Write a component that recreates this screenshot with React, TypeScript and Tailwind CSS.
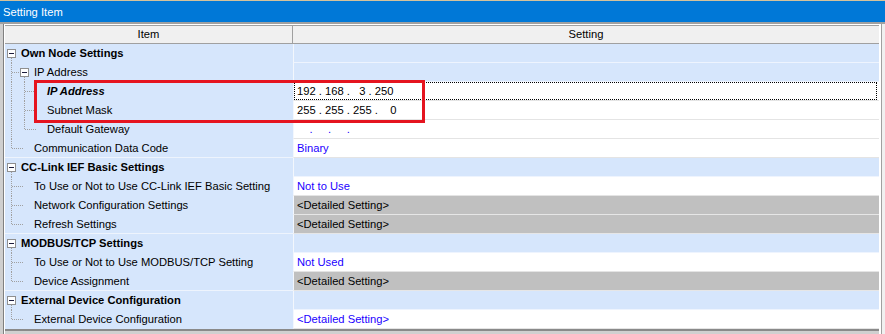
import React from "react";

type Row = {
  label: string;
  level: 0 | 1 | 2;
  bg: "blue" | "white" | "gray";
  value?: string;
  blue?: boolean;
  bold?: boolean;
  italic?: boolean;
  box?: boolean;
  last?: boolean;
  groupEnd?: boolean;
  focus?: boolean;
};

const rows: Row[] = [
  { label: "Own Node Settings", level: 0, bg: "blue" },
  { label: "IP Address", level: 1, box: true, bg: "blue" },
  { label: "IP Address", level: 2, bold: true, italic: true, bg: "white", value: "192 . 168 .   3 . 250", focus: true },
  { label: "Subnet Mask", level: 2, bg: "white", value: "255 . 255 . 255 .    0" },
  { label: "Default Gateway", level: 2, last: true, bg: "white", value: "    .     .     .", blue: true },
  { label: "Communication Data Code", level: 1, last: true, bg: "white", value: "Binary", blue: true, groupEnd: true },
  { label: "CC-Link IEF Basic Settings", level: 0, bg: "blue" },
  { label: "To Use or Not to Use CC-Link IEF Basic Setting", level: 1, bg: "white", value: "Not to Use", blue: true },
  { label: "Network Configuration Settings", level: 1, bg: "gray", value: "<Detailed Setting>" },
  { label: "Refresh Settings", level: 1, last: true, bg: "gray", value: "<Detailed Setting>", groupEnd: true },
  { label: "MODBUS/TCP Settings", level: 0, bg: "blue" },
  { label: "To Use or Not to Use MODBUS/TCP Setting", level: 1, bg: "white", value: "Not Used", blue: true },
  { label: "Device Assignment", level: 1, last: true, bg: "gray", value: "<Detailed Setting>", groupEnd: true },
  { label: "External Device Configuration", level: 0, bg: "blue" },
  { label: "External Device Configuration", level: 1, last: true, bg: "white", value: "<Detailed Setting>", blue: true },
];

const DOT = "#a0a0a0";

function MinusBox({ x }: { x: number }) {
  return (
    <g shapeRendering="crispEdges">
      <rect x={x + 0.5} y={5.5} width={8} height={8} fill="#ffffff" stroke="#8f8f8f" />
      <line x1={x + 2} x2={x + 7} y1={9.5} y2={9.5} stroke="#1c1c3c" />
    </g>
  );
}

function Tree({ row, h }: { row: Row; h: number }) {
  const w = row.level === 0 ? 16 : row.level === 1 ? 29 : 42;
  const dl = { stroke: DOT, strokeWidth: 1, strokeDasharray: "1 1", shapeRendering: "crispEdges" as const };
  return (
    <svg width={w} height={h} className="shrink-0">
      {row.level === 0 && (
        <>
          <line x1={6.5} x2={6.5} y1={14} y2={h} {...dl} />
          <MinusBox x={2} />
        </>
      )}
      {row.level === 1 && (
        <>
          <line x1={6.5} x2={6.5} y1={0} y2={row.last ? 10 : h} {...dl} />
          <line x1={7} x2={row.box ? 15 : 18} y1={9.5} y2={9.5} {...dl} />
          {row.box && (
            <>
              <line x1={19.5} x2={19.5} y1={14} y2={h} {...dl} />
              <MinusBox x={15} />
            </>
          )}
        </>
      )}
      {row.level === 2 && (
        <>
          <line x1={6.5} x2={6.5} y1={0} y2={h} {...dl} />
          <line x1={19.5} x2={19.5} y1={0} y2={row.last ? 10 : h} {...dl} />
          <line x1={20} x2={31} y1={9.5} y2={9.5} {...dl} />
        </>
      )}
    </svg>
  );
}

function RowView({ row }: { row: Row }) {
  const bg =
    row.bg === "blue" ? "bg-[#d6e6fc] border-[#eef4fe]" : row.bg === "gray" ? "bg-[#c0c0c0] border-[#e6e6e6]" : "bg-white border-[#e4e4e4]";
  const color = row.blue ? "text-[#2200ff]" : "text-black";
  return (
    <div className="flex h-[19px]">
      <div className={`flex w-[288px] bg-[#d6e6fc] ${row.groupEnd ? "h-[19px] border-b border-[#eef4fd]" : "h-[19px]"}`}>
        <Tree row={row} h={row.groupEnd ? 18 : 19} />
        <span
          className={`whitespace-nowrap leading-[18px] text-black ${row.level === 0 || row.bold ? "font-bold" : ""} ${
            row.italic ? "italic" : ""
          }`}
        >
          {row.label}
        </span>
      </div>
      <div className={`w-[586px] h-[19px] border-l border-l-[#f3f7fd] border-b ${bg}`}>
        {row.focus ? (
          <div className="h-[18px] mr-[2px] border border-dotted border-black pl-[2px] leading-[16px] whitespace-pre text-black">
            {row.value}
          </div>
        ) : (
          <div className={`pl-[3px] leading-[18px] whitespace-pre ${color}`}>{row.value ?? ""}</div>
        )}
      </div>
    </div>
  );
}

export default function App() {
  return (
    <div
      className="relative w-[885px] h-[334px] overflow-hidden bg-white text-[11.2px]"
      style={{ fontFamily: '"Liberation Sans", Arial, sans-serif' }}
    >
      <div className="h-px bg-[#d4c29c]" />
      <div className="h-[21px] bg-[#0078d7] pl-[3px] leading-[22px] text-white">Setting Item</div>
      <div className="h-[2px] bg-[#a0a0a0]" />
      <div className="flex h-[310px]">
        <div className="w-[3px] bg-[#cfcfcf]" />
        <div className="w-px bg-[#808080]" />
        <div className="w-px bg-white" />
        <div className="flex w-[874px] flex-col bg-white pt-px">
          <div className="flex h-[19px] border-y border-[#a0a0a0] bg-[#f0f0f0] text-black">
            <div className="w-[288px] border-r border-[#a0a0a0] text-center leading-[17px]">Item</div>
            <div className="flex-1 text-center leading-[17px]">Setting</div>
          </div>
          {rows.map((r, i) => (
            <RowView key={i} row={r} />
          ))}
          <div className="h-[2px] bg-[#8a8a8a]" />
          <div className="flex-1 bg-[#d0d0d0]" />
        </div>
        <div className="flex w-[6px] flex-col">
          <div className="flex flex-1">
            <div className="w-[2px] bg-white" />
            <div className="w-px bg-[#a0a0a0]" />
            <div className="w-[3px] bg-[#f0f0f0]" />
          </div>
        </div>
      </div>
      <div className="pointer-events-none absolute left-[34px] top-[80px] h-[43px] w-[391px] border-[3px] border-[#e5141f]" />
    </div>
  );
}
